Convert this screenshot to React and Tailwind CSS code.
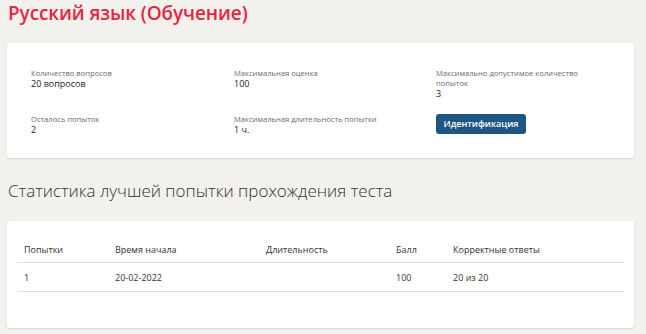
export default function App() {
  const font = { fontFamily: '"Open Sans", "Noto Sans", sans-serif' };
  return (
    <div className="w-[646px] h-[334px] bg-[#f2f1ee] overflow-hidden" style={font}>
      <div className="pl-[7px] pr-[12px]">
        <h1 className="text-[19px] leading-[26px] font-semibold text-[#e8243f] pl-[1px] tracking-[-0.1px]">
          Русский язык (Обучение)
        </h1>
        <div className="mt-[17px] bg-white rounded-[3px] shadow-[0_1px_2px_rgba(0,0,0,0.12)] h-[115px] pl-[24px] pt-[25px]">
          <div className="grid grid-cols-[203px_202px_1fr]">
            <div className="h-[46px]">
              <div className="text-[7.6px] leading-[10px] text-[#6a6a6a]">Количество вопросов</div>
              <div className="text-[9px] leading-[12px] text-[#222]">20 вопросов</div>
            </div>
            <div>
              <div className="text-[7.6px] leading-[10px] text-[#6a6a6a]">Максимальная оценка</div>
              <div className="text-[9px] leading-[12px] text-[#222]">100</div>
            </div>
            <div>
              <div className="text-[7.6px] leading-[10px] text-[#6a6a6a] w-[150px]">Максимально допустимое количество попыток</div>
              <div className="text-[9px] leading-[12px] text-[#222]">3</div>
            </div>
            <div>
              <div className="text-[7.6px] leading-[10px] text-[#6a6a6a]">Осталось попыток</div>
              <div className="text-[9px] leading-[12px] text-[#222]">2</div>
            </div>
            <div>
              <div className="text-[7.6px] leading-[10px] text-[#6a6a6a]">Максимальная длительность попытки</div>
              <div className="text-[9px] leading-[12px] text-[#222]">1 ч.</div>
            </div>
            <div className="-mt-[5px]">
              <button className="h-[20px] w-[90px] rounded-[3px] bg-[#1d5585] text-white text-[9px] font-semibold leading-[20px]">
                Идентификация
              </button>
            </div>
          </div>
        </div>
        <h2 className="mt-[22px] text-[17px] leading-[22px] font-light text-[#333] pl-[1px]">
          Статистика лучшей попытки прохождения теста
        </h2>
        <div className="mt-[19px] bg-white rounded-[3px] shadow-[0_1px_2px_rgba(0,0,0,0.12)] h-[107px] px-[10px] pt-[20px]">
          <div className="grid grid-cols-[91px_151px_130px_57px_1fr] text-[9px] leading-[12px] text-[#333] border-b border-[#dedede] h-[22px]">
            <div className="pl-[7px] pt-[3px]">Попытки</div>
            <div className="pl-[7px] pt-[3px]">Время начала</div>
            <div className="pl-[7px] pt-[3px]">Длительность</div>
            <div className="pl-[7px] pt-[3px]">Балл</div>
            <div className="pl-[7px] pt-[3px]">Корректные ответы</div>
          </div>
          <div className="grid grid-cols-[91px_151px_130px_57px_1fr] text-[9px] leading-[12px] text-[#333] border-b border-[#dedede] h-[29px]">
            <div className="pl-[7px] pt-[9px]">1</div>
            <div className="pl-[7px] pt-[9px]">20-02-2022</div>
            <div className="pl-[7px] pt-[9px]"></div>
            <div className="pl-[7px] pt-[9px]">100</div>
            <div className="pl-[7px] pt-[9px]">20 из 20</div>
          </div>
        </div>
      </div>
    </div>
  );
}
